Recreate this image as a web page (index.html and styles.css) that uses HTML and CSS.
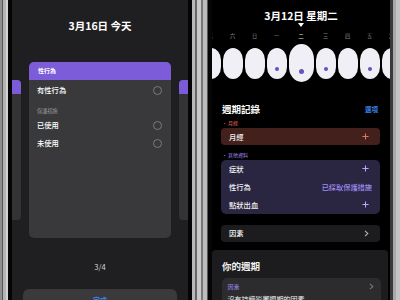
FILE: index.html
```html
<!DOCTYPE html>
<html lang="zh-Hant">
<head>
<meta charset="utf-8">
<link rel="stylesheet" href="styles.css">
</head>
<body>
<div class="stage">
  <div class="frame frame-left"></div>
  <div class="bezel"></div>
  <div class="screen screen-left">
    <div class="l-title">3月16日 今天</div>
    <div class="carousel">
      <div class="side-card"><div class="side-top"></div></div>
      <div class="main-card">
        <div class="mc-head">性行為</div>
        <div class="mc-body">
          <div class="opt"><span>有性行為</span><span class="radio"></span></div>
          <div class="mc-label">保護措施</div>
          <div class="opt"><span>已使用</span><span class="radio"></span></div>
          <div class="opt"><span>未使用</span><span class="radio"></span></div>
        </div>
      </div>
      <div class="side-card"><div class="side-top"></div></div>
    </div>
    <div class="pager">3/4</div>
    <div class="done-btn">完成</div>
  </div>
  <div class="bezel"></div>
  <div class="frame frame-mid"></div>
  <div class="bezel"></div>
  <div class="screen screen-right">
    <div class="r-title">3月12日 星期二</div>
    <div class="caret"></div>
    <div class="week week-labels">
      <span class="wk">五</span><span class="wk">六</span><span class="wk">日</span><span class="wk">一</span><span class="wk sel">二</span><span class="wk">三</span><span class="wk">四</span><span class="wk">五</span><span class="wk">六</span>
    </div>
    <div class="week week-pills">
      <div class="pill"></div>
      <div class="pill"></div>
      <div class="pill"></div>
      <div class="pill"><span class="dot"></span></div>
      <div class="pill sel"><span class="dot"></span></div>
      <div class="pill"><span class="dot"></span></div>
      <div class="pill"></div>
      <div class="pill"><span class="dot"></span></div>
      <div class="pill"></div>
    </div>
    <div class="log">
      <div class="log-head"><span class="h">週期記錄</span><span class="link">選項</span></div>
      <div class="tag tag-red">• 月經</div>
      <div class="row red-row"><span>月經</span>
        <svg class="plus" viewBox="0 0 8 8" width="7" height="7"><path d="M4 0.5V7.5M0.5 4H7.5" stroke="#e0775c" stroke-width="1.2"/></svg>
      </div>
      <div class="tag tag-purple">• 其他資料</div>
      <div class="purple-card">
        <div class="prow"><span>症狀</span>
          <svg class="plus" viewBox="0 0 8 8" width="7" height="7"><path d="M4 0.5V7.5M0.5 4H7.5" stroke="#b9a8ff" stroke-width="1.2"/></svg>
        </div>
        <div class="prow"><span>性行為</span><span class="pval">已採取保護措施</span></div>
        <div class="prow"><span>點狀出血</span>
          <svg class="plus" viewBox="0 0 8 8" width="7" height="7"><path d="M4 0.5V7.5M0.5 4H7.5" stroke="#b9a8ff" stroke-width="1.2"/></svg>
        </div>
      </div>
      <div class="row dark-row"><span>因素</span>
        <svg class="chev" viewBox="0 0 6 8" width="5" height="7"><path d="M1.2 0.8L4.6 4L1.2 7.2" fill="none" stroke="#b0b0b0" stroke-width="1.3"/></svg>
      </div>
    </div>
    <div class="cycle">
      <div class="cycle-h">你的週期</div>
      <div class="cycle-card">
        <div class="cc-top"><span class="cc-tag">因素</span>
          <svg class="chev" viewBox="0 0 6 8" width="5" height="7"><path d="M1.2 0.8L4.6 4L1.2 7.2" fill="none" stroke="#777" stroke-width="1.3"/></svg>
        </div>
        <div class="cc-text">沒有持續影響週期的因素</div>
      </div>
    </div>
  </div>
  <div class="frame frame-right"></div>
</div>
</body>
</html>
```

FILE: styles.css
```css
html, body {
  margin: 0;
  padding: 0;
  background: #9a9a9a;
}
body {
  width: 400px;
  height: 300px;
  overflow: hidden;
  font-family: "Noto Sans CJK TC", "Noto Sans", sans-serif;
  color: #f2f2f2;
}
.stage {
  display: flex;
  width: 400px;
  height: 300px;
}
.frame { flex: none; height: 300px; }
.frame-left {
  width: 8px;
  background: linear-gradient(to right, #8e8e8e 0 2px, #555 2px 3px, #b3b3b3 3px 6px, #d2d2d2 6px 8px);
}
.frame-mid {
  width: 16px;
  background: linear-gradient(to right, #b8b8b8 0 3px, #666 3px 5px, #c9c9c9 5px 9px, #777 9px 11px, #bcbcbc 11px 15px, #555 15px 16px);
}
.frame-right {
  width: 10px;
  background: linear-gradient(to right, #3a3a3a 0 3px, #a9a9a9 3px 6px, #c4c4c4 6px 10px);
}
.bezel { flex: none; width: 4px; height: 300px; background: #050505; }

.screen { flex: none; height: 300px; overflow: hidden; }

/* Left phone */
.screen-left {
  width: 176px;
  background: #1f1f21;
  display: flex;
  flex-direction: column;
  align-items: center;
}
.l-title {
  margin-top: 19px;
  font-size: 10.5px;
  line-height: 13px;
  font-weight: 700;
  color: #fff;
}
.carousel {
  margin-top: 30px;
  width: 176px;
  display: flex;
  justify-content: center;
  align-items: center;
  gap: 8px;
}
.side-card {
  flex: none;
  width: 60px;
  height: 140px;
  border-radius: 4px;
  background: #333335;
  overflow: hidden;
}
.side-top { height: 14px; background: #7b5bd8; }
.main-card {
  flex: none;
  width: 142px;
  height: 176px;
  border-radius: 5px;
  overflow: hidden;
  background: #39393b;
}
.mc-head {
  height: 18px;
  background: #7c5cd9;
  padding-left: 9px;
  font-size: 6px;
  line-height: 18px;
  font-weight: 700;
  color: #fff;
}
.mc-body { padding: 1px 9px 0 8px; }
.opt {
  display: flex;
  justify-content: space-between;
  align-items: center;
  height: 18px;
  font-size: 7.3px;
  font-weight: 500;
  color: #fff;
}
.radio {
  width: 7px;
  height: 7px;
  border: 1px solid #7a7a7c;
  border-radius: 50%;
}
.mc-label {
  margin-top: 7px;
  height: 10px;
  font-size: 5.2px;
  line-height: 10px;
  color: #9a9a9c;
}
.pager {
  margin-top: 24px;
  font-size: 7.5px;
  line-height: 10px;
  color: #d6d6d6;
}
.done-btn {
  margin-top: 17px;
  width: 154px;
  height: 22px;
  border-radius: 6px;
  background: #3a3a3c;
  text-align: center;
  font-size: 7px;
  line-height: 22px;
  padding-top: 0;
  color: #3f86f2;
  font-weight: 700;
}

/* Right phone */
.screen-right {
  width: 178px;
  background: #000;
  display: flex;
  flex-direction: column;
  align-items: center;
}
.r-title {
  margin-top: 10px;
  font-size: 10.5px;
  line-height: 12px;
  font-weight: 700;
  color: #fff;
}
.caret {
  margin-top: 1px;
  width: 0;
  height: 0;
  border-left: 3px solid transparent;
  border-right: 3px solid transparent;
  border-top: 4.5px solid #fff;
}
.week {
  width: 178px;
  display: flex;
  justify-content: center;
  gap: 2px;
}
.week-labels { margin-top: 5px; height: 8px; }
.wk {
  flex: none;
  width: 20px;
  text-align: center;
  font-size: 5.2px;
  line-height: 8px;
  color: #8a8a8a;
}
.wk.sel { width: 25px; color: #e0e0e0; }
.week-pills {
  margin-top: 4px;
  height: 38px;
  align-items: center;
}
.pill {
  flex: none;
  position: relative;
  width: 20px;
  height: 31px;
  border-radius: 10px / 12px;
  background: #f1eff6;
}
.pill.sel {
  width: 25px;
  height: 38px;
  border-radius: 12.5px / 15px;
}
.dot {
  position: absolute;
  left: 50%;
  bottom: 7.5px;
  width: 4px;
  height: 4px;
  margin-left: -2px;
  border-radius: 50%;
  background: #6a4fc0;
}
.pill.sel .dot {
  width: 5px;
  height: 5px;
  margin-left: -2.5px;
  bottom: 8px;
}

.log {
  width: 159px;
  margin-top: 21px;
  display: flex;
  flex-direction: column;
  margin-left: -1px;
}
.log-head {
  display: flex;
  justify-content: space-between;
  align-items: center;
  height: 12px;
  padding-left: 1px;
}
.log-head .h {
  font-size: 9.5px;
  font-weight: 700;
  line-height: 12px;
  color: #fff;
}
.link {
  font-size: 6.5px;
  color: #3f86f2;
  margin-right: 2px;
  font-weight: 700;
}
.tag {
  font-size: 5px;
  line-height: 7px;
  padding-left: 1px;
}
.tag-red { margin-top: 3.5px; color: #e2655c; }
.tag-purple { margin-top: 5.5px; color: #a08ef2; }
.row {
  display: flex;
  justify-content: space-between;
  align-items: center;
  height: 17px;
  border-radius: 4px;
  padding: 0 11px 0 8px;
  font-size: 7.3px;
  font-weight: 500;
  color: #f2f2f2;
}
.red-row { margin-top: 2.5px; background: #43201b; }
.purple-card {
  margin-top: 2px;
  height: 54px;
  border-radius: 5px;
  background: #2a2541;
  display: flex;
  flex-direction: column;
}
.prow {
  display: flex;
  justify-content: space-between;
  align-items: center;
  height: 18px;
  padding: 0 11px 0 8px;
  font-size: 7.3px;
  font-weight: 500;
  color: #f2f2f2;
}
.prow:first-child { margin-top: 0; }
.pval { color: #a08ef2; font-size: 7.2px; margin-right: -3px; }
.dark-row { margin-top: 11px; background: #1c1c1e; }

.cycle {
  margin-top: 8px;
  width: 176px;
  margin-right: 2px;
  flex: 1;
  background: #1c1c1e;
  border-radius: 4px 4px 0 0;
  display: flex;
  flex-direction: column;
  align-items: center;
}
.cycle-h {
  align-self: stretch;
  margin-top: 10px;
  padding-left: 10px;
  font-size: 9.5px;
  line-height: 12px;
  font-weight: 700;
  color: #f2f2f2;
}
.cycle-card {
  margin-top: 6px;
  width: 159px;
  margin-left: 2px;
  flex: 1;
  background: #2c2c2e;
  border-radius: 5px 5px 0 0;
  padding: 4px 7px 0 6px;
  box-sizing: border-box;
}
.cc-top {
  display: flex;
  justify-content: space-between;
  align-items: center;
  height: 10px;
}
.cc-tag { font-size: 6px; color: #9c8af0; }
.cc-text {
  margin-top: 2px;
  font-size: 7px;
  line-height: 10px;
  color: #f2f2f2;
}
```
